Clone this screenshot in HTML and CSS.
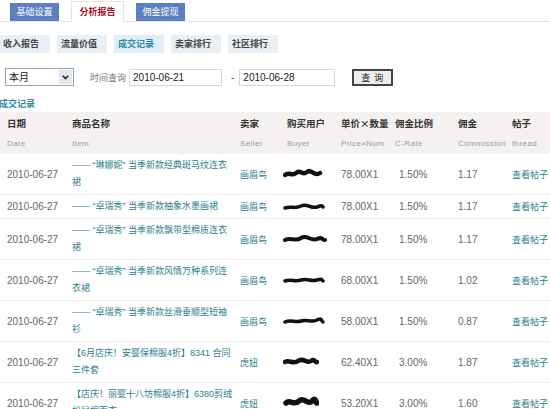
FILE: index.html
```html
<!DOCTYPE html>
<html lang="zh-CN">
<head>
<meta charset="utf-8">
<title>成交记录</title>
<link rel="stylesheet" href="styles.css">
</head>
<body>
<div class="page">
  <div class="tabs">
    <span class="tab">基础设置</span>
    <span class="tab tab-active">分析报告</span>
    <span class="tab">佣金提现</span>
  </div>
  <div class="subtabs">
    <span class="subtab">收入报告</span>
    <span class="subtab">流量价值</span>
    <span class="subtab subtab-active">成交记录</span>
    <span class="subtab">卖家排行</span>
    <span class="subtab">社区排行</span>
  </div>
  <div class="filters">
    <div class="select"><span class="select-text">本月</span><span class="select-arrow"><svg width="7" height="5" viewBox="0 0 7 5"><path d="M0.8 0.8 L3.5 3.6 L6.2 0.8" fill="none" stroke="#222" stroke-width="1.6"/></svg></span></div>
    <span class="label">时间查询</span>
    <span class="input">2010-06-21</span>
    <span class="dash">-</span>
    <span class="input input2">2010-06-28</span>
    <span class="button">查 询</span>
  </div>
  <div class="title">成交记录</div>
  <table class="grid">
    <colgroup>
      <col class="c-date"><col class="c-item"><col class="c-seller"><col class="c-buyer"><col class="c-price"><col class="c-rate"><col class="c-comm"><col class="c-thread">
    </colgroup>
    <thead>
      <tr class="h-cn"><th>日期</th><th>商品名称</th><th>卖家</th><th>购买用户</th><th>单价×数量</th><th>佣金比例</th><th>佣金</th><th>帖子</th></tr>
      <tr class="h-en"><th>Date</th><th>Item</th><th>Seller</th><th>Buyer</th><th>Price×Num</th><th>C-Rate</th><th>Commission</th><th>thread</th></tr>
    </thead>
    <tbody>
      <tr><td>2010-06-27</td><td class="link item">—— “琳娜妮” 当季新款经典斑马纹连衣裙</td><td class="link">画眉鸟</td><td><svg class="scrib" width="40" height="12" viewBox="0 0 40 12"><path d="M2 7 C6 3 9 9 13 5 S20 8 24 4 S31 9 37 5" stroke="#111" stroke-width="4.5" fill="none" stroke-linecap="round"/></svg></td><td>78.00X1</td><td class="rate">1.50%</td><td>1.17</td><td class="link">查看帖子</td></tr>
      <tr><td>2010-06-27</td><td class="link item">—— “卓瑞秀” 当季新款抽象水墨画裙</td><td class="link">画眉鸟</td><td><svg class="scrib" width="42" height="12" viewBox="0 0 42 12"><path d="M2 7 C8 5 12 8 18 5 S28 8 34 6 S38 4 40 6" stroke="#111" stroke-width="3.5" fill="none" stroke-linecap="round"/></svg></td><td>78.00X1</td><td class="rate">1.50%</td><td>1.17</td><td class="link">查看帖子</td></tr>
      <tr><td>2010-06-27</td><td class="link item">—— “卓瑞秀” 当季新款飘带型棉质连衣裙</td><td class="link">画眉鸟</td><td><svg class="scrib" width="44" height="12" viewBox="0 0 44 12"><path d="M2 7 C8 4 12 9 18 5 S28 9 34 6 S40 8 42 7" stroke="#111" stroke-width="4" fill="none" stroke-linecap="round"/></svg></td><td>78.00X1</td><td class="rate">1.50%</td><td>1.17</td><td class="link">查看帖子</td></tr>
      <tr><td>2010-06-27</td><td class="link item">—— “卓瑞秀” 当季新款风情万种系列连衣裙</td><td class="link">画眉鸟</td><td><svg class="scrib" width="42" height="12" viewBox="0 0 42 12"><path d="M2 7 C8 5 12 8 18 6 S28 8 34 6 S38 6 40 7" stroke="#111" stroke-width="3.5" fill="none" stroke-linecap="round"/></svg></td><td>68.00X1</td><td class="rate">1.50%</td><td>1.02</td><td class="link">查看帖子</td></tr>
      <tr><td>2010-06-27</td><td class="link item">—— “卓瑞秀” 当季新款丝滑垂顺型短袖衫</td><td class="link">画眉鸟</td><td><svg class="scrib" width="42" height="12" viewBox="0 0 42 12"><path d="M2 7 C8 4 12 8 18 6 S28 8 34 5 S38 7 40 7" stroke="#111" stroke-width="3.5" fill="none" stroke-linecap="round"/></svg></td><td>58.00X1</td><td class="rate">1.50%</td><td>0.87</td><td class="link">查看帖子</td></tr>
      <tr><td>2010-06-27</td><td class="link item">【6月店庆！安婴保棉服4折】8341 合同三件套</td><td class="link">虎妞</td><td><svg class="scrib" width="36" height="12" viewBox="0 0 36 12"><path d="M2 6 C6 3 10 9 15 5 S24 8 28 5 S32 7 34 6" stroke="#111" stroke-width="4.5" fill="none" stroke-linecap="round"/></svg></td><td>62.40X1</td><td class="rate">3.00%</td><td>1.87</td><td class="link">查看帖子</td></tr>
      <tr><td>2010-06-27</td><td class="link item">【店庆！丽婴十八坊棉服4折】6380剪绒松鼠棉面衣</td><td class="link">虎妞</td><td><svg class="scrib" width="36" height="14" viewBox="0 0 36 14"><path d="M3 7 C7 3 11 10 16 5 S25 10 29 5 S33 8 34 7" stroke="#111" stroke-width="5.5" fill="none" stroke-linecap="round"/></svg></td><td>53.20X1</td><td class="rate">3.00%</td><td>1.60</td><td class="link">查看帖子</td></tr>
    </tbody>
  </table>
</div>
</body>
</html>
```
FILE: styles.css
```css
html, body {
  margin: 0;
  padding: 0;
  background: #ffffff;
}
body {
  font-family: "Liberation Sans", "Noto Sans CJK SC", sans-serif;
  font-size: 10px;
  color: #666;
  overflow: hidden;
}
.page {
  width: 550px;
}
.tabs {
  display: flex;
  align-items: flex-end;
  gap: 12px;
  height: 21px;
  padding-left: 10px;
  border-bottom: 1px solid #e4e4e4;
}
.tab {
  width: 49px;
  height: 18px;
  line-height: 18px;
  text-align: center;
  background: #5c80bf;
  color: #ffffff;
  font-size: 9px;
  font-family: "Noto Sans CJK SC", sans-serif;
}
.tab-active {
  width: 51px;
  height: 20px;
  line-height: 20px;
  background: #ffffff;
  color: #a4101b;
  font-weight: bold;
  border: 1px solid #e4e4e4;
  border-bottom: none;
  margin-bottom: -1px;
}
.subtabs {
  display: flex;
  gap: 7px;
  margin-top: 13px;
  height: 18px;
}
.subtab {
  width: 46px;
  height: 18px;
  line-height: 18px;
  padding-left: 4px;
  background: #e9f0f5;
  color: #444;
  font-weight: bold;
  font-size: 9px;
  font-family: "Noto Sans CJK SC", sans-serif;
}
.subtab:first-child {
  padding-left: 3px;
  width: 47px;
}
.subtab-active {
  background: #dfeef8;
  color: #2c8a9e;
}
.filters {
  display: flex;
  align-items: center;
  margin-top: 15px;
  height: 18px;
  padding-left: 5px;
}
.select {
  display: flex;
  width: 67px;
  height: 16px;
  border: 1px solid #9aa3ad;
  background: #fff;
}
.select-text {
  flex: 1;
  line-height: 16px;
  padding-left: 3px;
  color: #111;
  font-size: 10px;
  font-family: "Noto Sans CJK SC", sans-serif;
}
.select-arrow {
  width: 13px;
  height: 14px;
  margin: 1px 1px 1px 0;
  background: #dfe6ee;
  display: flex;
  align-items: center;
  justify-content: center;
}
.label {
  margin-left: 16px;
  color: #777;
  font-size: 9px;
  font-family: "Noto Sans CJK SC", sans-serif;
}
.input {
  margin-left: 3px;
  width: 88px;
  height: 15px;
  line-height: 15px;
  padding-left: 3px;
  border: 1px solid #d8d8d8;
  color: #222;
  font-size: 10px;
}
.dash {
  margin-left: 9px;
  color: #555;
}
.input2 {
  margin-left: 5px;
  width: 91px;
}
.button {
  margin-left: 17px;
  width: 37px;
  height: 13px;
  line-height: 13px;
  text-align: center;
  border: 2px solid #444;
  background: #ededed;
  color: #222;
  font-size: 9px;
  font-family: "Noto Sans CJK SC", sans-serif;
  letter-spacing: 1px;
}
.title {
  margin-top: 11px;
  margin-left: -1px;
  height: 14px;
  line-height: 14px;
  color: #2e8ca4;
  font-weight: bold;
  font-size: 9px;
  font-family: "Noto Sans CJK SC", sans-serif;
}
.grid {
  margin-top: 1px;
  width: 550px;
  table-layout: fixed;
  border-collapse: collapse;
}
.c-date { width: 72px; }
.c-item { width: 168px; }
.c-seller { width: 47px; }
.c-buyer { width: 54px; }
.c-price { width: 54px; }
.c-rate { width: 63px; }
.c-comm { width: 54px; }
.c-thread { width: 38px; }
.grid th {
  text-align: left;
  padding: 0;
  background: #f5f1f0;
  white-space: nowrap;
}
.grid th:first-child,
.grid td:first-child {
  padding-left: 7px;
}
.h-cn th {
  height: 20px;
  padding-top: 1px;
  color: #333;
  font-weight: bold;
  font-size: 9.5px;
  font-family: "Noto Sans CJK SC", sans-serif;
}
.h-en th {
  height: 20px;
  padding-bottom: 1px;
  color: #999;
  font-weight: normal;
  font-size: 8px;
  letter-spacing: 0.4px;
}
.grid td {
  padding: 3px 0 3px 0;
  line-height: 17px;
  vertical-align: middle;
  border-bottom: 1px solid #ececec;
  color: #666;
  font-size: 10px;
  white-space: nowrap;
}
.grid td.link {
  color: #2c7e8e;
  font-size: 9px;
  font-family: "Noto Sans CJK SC", sans-serif;
}
.grid td.item {
  white-space: normal;
  padding-right: 5px;
  font-family: "Liberation Sans", "Noto Sans CJK SC", sans-serif;
}
.grid td.rate {
  padding-left: 4px;
}
.scrib {
  display: block;
  margin-left: -4px;
  filter: blur(0.4px);
}
```
